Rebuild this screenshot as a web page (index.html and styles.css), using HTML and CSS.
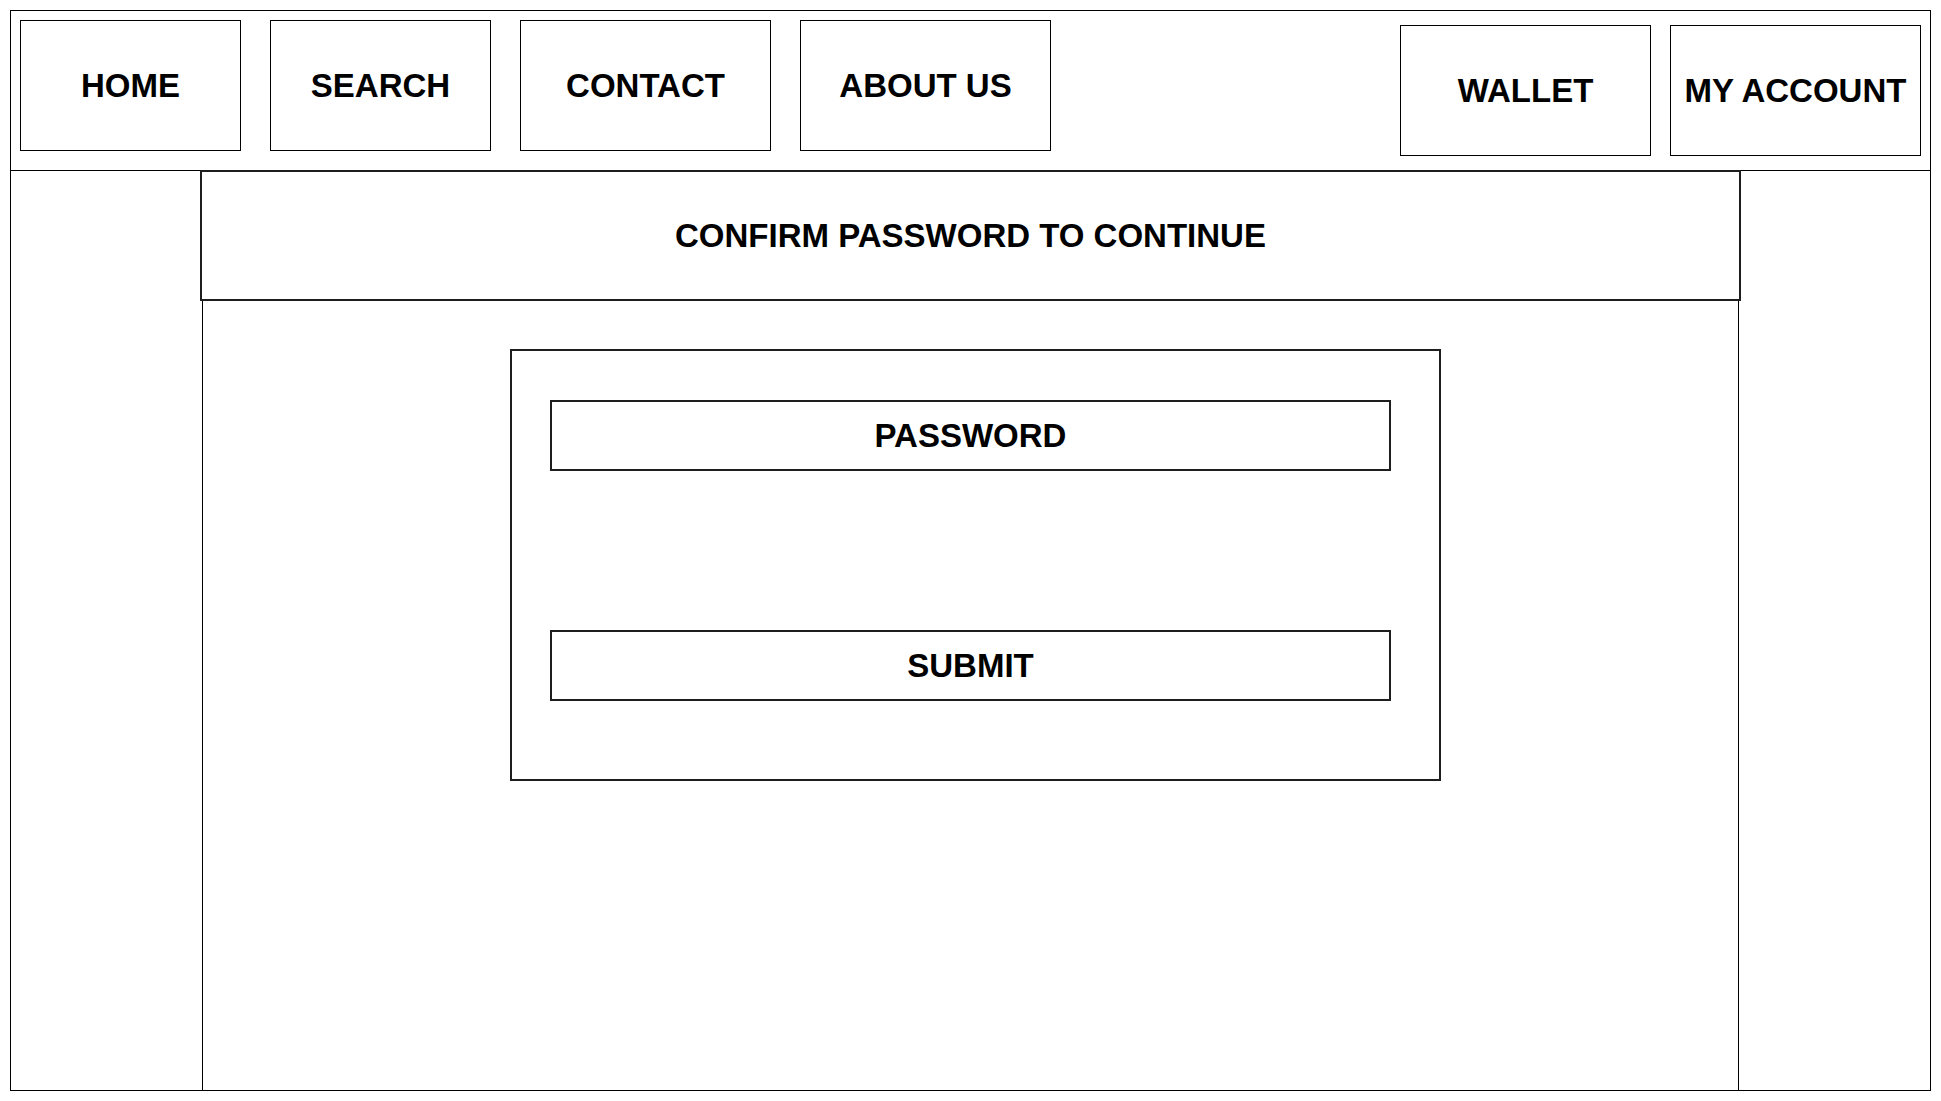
FILE: index.html
```html
<!DOCTYPE html>
<html lang="en">
<head>
<meta charset="utf-8">
<title>Confirm Password</title>
<link rel="stylesheet" href="styles.css">
</head>
<body>
<div class="frame">
  <header class="topbar">
    <nav class="nav-left">
      <div class="navbox w221">HOME</div>
      <div class="navbox w221">SEARCH</div>
      <div class="navbox w251">CONTACT</div>
      <div class="navbox w251">ABOUT US</div>
    </nav>
    <nav class="nav-right">
      <div class="navbox w251">WALLET</div>
      <div class="navbox w251">MY ACCOUNT</div>
    </nav>
  </header>
  <main class="main">
    <div class="title">CONFIRM PASSWORD TO CONTINUE</div>
    <section class="column">
      <div class="form">
        <div class="field">PASSWORD</div>
        <div class="field submit">SUBMIT</div>
      </div>
    </section>
  </main>
</div>
</body>
</html>
```
FILE: styles.css
```css
* { box-sizing: border-box; }
html, body { margin: 0; padding: 0; background: #fff; }
body {
  font-family: "Liberation Sans", Arial, sans-serif;
  font-weight: bold;
  color: #000;
}
.frame {
  margin: 10px 0 0 10px;
  width: 1921px;
  height: 1081px;
  border: 1px solid #000;
  display: flex;
  flex-direction: column;
}
.topbar {
  height: 160px;
  flex: none;
  border-bottom: 1px solid #000;
  display: flex;
  justify-content: space-between;
  align-items: flex-start;
  padding: 9px 9px 0 9px;
}
.nav-left { display: flex; gap: 29px; }
.nav-right { display: flex; gap: 19px; margin-top: 5px; }
.navbox {
  height: 131px;
  border: 1px solid #000;
  display: flex;
  align-items: center;
  justify-content: center;
  font-size: 33px;
  padding-top: 1px;
  white-space: nowrap;
}
.w221 { width: 221px; }
.w251 { width: 251px; }
.main {
  flex: 1;
  display: flex;
  flex-direction: column;
  padding-left: 189px;
}
.title {
  width: 1541px;
  height: 131px;
  flex: none;
  margin-top: -1px;
  border: 2px solid #1e1e1e;
  display: flex;
  align-items: center;
  justify-content: center;
  font-size: 33px;
  background: #fff;
}
.column {
  flex: 1;
  margin-left: 2px;
  width: 1537px;
  border-left: 1px solid #000;
  border-right: 1px solid #000;
  padding-top: 48px;
}
.form {
  margin-left: 307px;
  width: 931px;
  height: 432px;
  border: 2px solid #1e1e1e;
  padding: 49px 0 0 38px;
  display: flex;
  flex-direction: column;
}
.field {
  width: 841px;
  height: 71px;
  border: 2px solid #1e1e1e;
  display: flex;
  align-items: center;
  justify-content: center;
  font-size: 33px;
}
.field + .field { margin-top: 159px; }
```
